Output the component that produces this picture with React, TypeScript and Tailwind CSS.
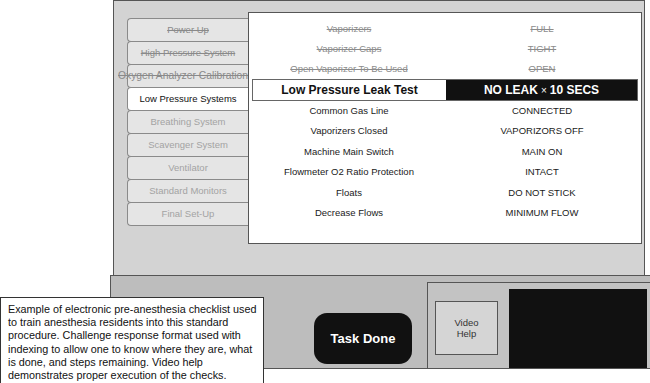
import React from "react";

const tabs = [
  { label: "Power Up", state: "done" },
  { label: "High Pressure System", state: "done" },
  { label: "Oxygen Analyzer Calibration", state: "done", wide: true },
  { label: "Low Pressure Systems", state: "active" },
  { label: "Breathing System", state: "todo" },
  { label: "Scavenger System", state: "todo" },
  { label: "Ventilator", state: "todo" },
  { label: "Standard Monitors", state: "todo" },
  { label: "Final Set-Up", state: "todo" },
];

const doneRows = [
  ["Vaporizers", "FULL"],
  ["Vaporizer Caps", "TIGHT"],
  ["Open Vaporizer To Be Used", "OPEN"],
];

const todoRows = [
  ["Common Gas Line", "CONNECTED"],
  ["Vaporizers Closed", "VAPORIZORS OFF"],
  ["Machine Main Switch", "MAIN ON"],
  ["Flowmeter O2 Ratio Protection", "INTACT"],
  ["Floats", "DO NOT STICK"],
  ["Decrease Flows", "MINIMUM FLOW"],
];

const caption = [
  "Example of electronic pre-anesthesia checklist used",
  "to train anesthesia residents into this standard",
  "procedure. Challenge response format used with",
  "indexing to allow one to know where they are, what",
  "is done, and steps remaining. Video help",
  "demonstrates proper execution of the checks.",
];

export default function App() {
  return (
    <div className="relative w-[650px] h-[383px] overflow-hidden bg-white font-['Liberation_Sans',Arial,sans-serif]">
      {/* Upper frame: section tabs + checklist */}
      <div className="ml-[113px] w-[532px] h-[275px] border-l border-t border-r border-[#555] bg-[#d3d3d3] flex items-start">
        <div className="ml-[13px] mt-[17px] w-[121px] flex flex-col">
          {tabs.map((t, i) => (
            <div
              key={t.label}
              className={
                "h-[24px] flex items-center whitespace-nowrap rounded-l-[4px] border border-r-0 border-[#8a8a8a] " +
                (t.wide ? "justify-end text-[10.3px] " : "justify-center text-[9.5px] ") +
                (i > 0 ? "-mt-px " : "") +
                (t.state === "active"
                  ? "bg-white text-[#111]"
                  : t.state === "done"
                  ? "bg-[#e5e5e5] text-[#8a8a8a] line-through"
                  : "bg-[#e5e5e5] text-[#a3a3a3]")
              }
            >
              {t.label}
            </div>
          ))}
        </div>

        <div className="mt-[11px] w-[394px] h-[232px] border border-[#555] bg-white px-[3px] pt-[6px]">
          {doneRows.map(([a, b]) => (
            <div key={a} className="h-[20px] flex items-center text-[9.5px] text-[#8c8c8c] line-through">
              <div className="w-[194px] text-center">{a}</div>
              <div className="flex-1 text-center">{b}</div>
            </div>
          ))}
          <div className="h-[22px] flex border border-[#666] text-[12px] font-bold">
            <div className="w-[193px] flex items-center justify-center bg-white text-[#111]">Low Pressure Leak Test</div>
            <div className="flex-1 flex items-center justify-center bg-[#111] text-white">
              NO LEAK <span className="mx-[3px] text-[10px] font-normal">×</span> 10 SECS
            </div>
          </div>
          {todoRows.map(([a, b]) => (
            <div key={a} className="h-[20.4px] flex items-center text-[9.5px] text-[#1a1a1a]">
              <div className="w-[194px] text-center">{a}</div>
              <div className="flex-1 text-center">{b}</div>
            </div>
          ))}
        </div>
      </div>

      {/* Lower control bar */}
      <div className="ml-[110px] w-[541px] h-[94px] border border-[#555] bg-[#bdbdbd] flex items-start">
        <button className="ml-[203px] mt-[37px] w-[98px] h-[51px] rounded-[13px] bg-[#111] text-white font-bold text-[13px] flex items-center justify-center">
          Task Done
        </button>
        <div className="ml-[15px] mt-[6px] self-stretch flex-1 border-l border-t border-[#555] bg-[#c3c3c3] flex items-start">
          <div className="ml-[7px] mt-[18px] w-[63px] h-[54px] border border-[#555] bg-[#d5d5d5] text-[9.5px] leading-[11px] text-[#333] flex items-center justify-center text-center">
            Video
            <br />
            Help
          </div>
          <div className="ml-[11px] mt-[6px] w-[138px] self-stretch bg-[#111]" />
        </div>
      </div>

      {/* Caption overlapping the bar */}
      <div className="absolute left-0 top-[297px] w-[264px] h-[87px] border border-[#333] bg-white pl-[7px] pt-[5px] text-[10.8px] leading-[13.2px] text-[#111] whitespace-nowrap">
        {caption.map((line) => (
          <div key={line}>{line}</div>
        ))}
      </div>
    </div>
  );
}
